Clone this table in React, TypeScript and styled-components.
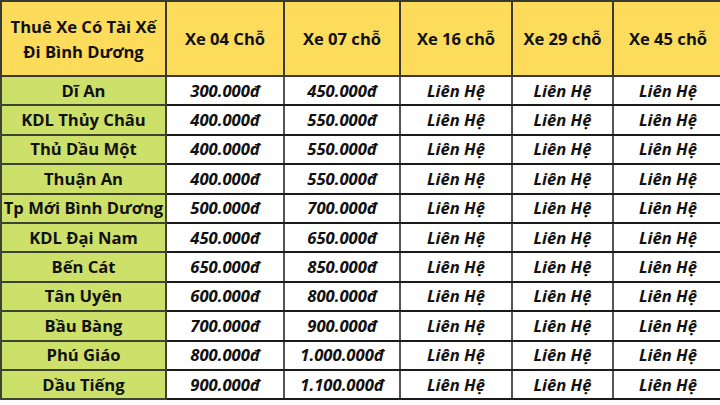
import React from 'react';
import styled, { createGlobalStyle } from 'styled-components';

const GlobalStyle = createGlobalStyle`
  html, body {
    margin: 0;
    padding: 0;
    background: #ffffff;
  }
  body {
    font-family: 'Open Sans', 'Noto Sans', sans-serif;
    width: 720px;
    height: 405px;
    overflow: hidden;
  }
`;

const rows = [
  { place: 'Dĩ An', p4: '300.000đ', p7: '450.000đ' },
  { place: 'KDL Thủy Châu', p4: '400.000đ', p7: '550.000đ' },
  { place: 'Thủ Dầu Một', p4: '400.000đ', p7: '550.000đ' },
  { place: 'Thuận An', p4: '400.000đ', p7: '550.000đ' },
  { place: 'Tp Mới Bình Dương', p4: '500.000đ', p7: '700.000đ' },
  { place: 'KDL Đại Nam', p4: '450.000đ', p7: '650.000đ' },
  { place: 'Bến Cát', p4: '650.000đ', p7: '850.000đ' },
  { place: 'Tân Uyên', p4: '600.000đ', p7: '800.000đ' },
  { place: 'Bầu Bàng', p4: '700.000đ', p7: '900.000đ' },
  { place: 'Phú Giáo', p4: '800.000đ', p7: '1.000.000đ' },
  { place: 'Dầu Tiếng', p4: '900.000đ', p7: '1.100.000đ' },
];

const columns = [
  { title: 'Xe 04 Chỗ', width: 118 },
  { title: 'Xe 07 chỗ', width: 116 },
  { title: 'Xe 16 chỗ', width: 112 },
  { title: 'Xe 29 chỗ', width: 101 },
  { title: 'Xe 45 chỗ', width: 110 },
];

const App: React.FC = () => {
  return (
    <>
      <GlobalStyle />
      <Table>
        <colgroup>
          <col style={{ width: 165 }} />
          {columns.map((c) => (
            <col key={c.title} style={{ width: c.width }} />
          ))}
        </colgroup>
        <thead>
          <tr>
            <HeadCell>
              Thuê Xe Có Tài Xế
              <br />
              Đi Bình Dương
            </HeadCell>
            {columns.map((c) => (
              <HeadCell key={c.title}>{c.title}</HeadCell>
            ))}
          </tr>
        </thead>
        <tbody>
          {rows.map((r) => (
            <Row key={r.place}>
              <PlaceCell>{r.place}</PlaceCell>
              <PriceCell>{r.p4}</PriceCell>
              <PriceCell>{r.p7}</PriceCell>
              <PriceCell>Liên Hệ</PriceCell>
              <PriceCell>Liên Hệ</PriceCell>
              <PriceCell>Liên Hệ</PriceCell>
            </Row>
          ))}
        </tbody>
      </Table>
    </>
  );
};

export default App;

const Table = styled.table`
  border-collapse: collapse;
  table-layout: fixed;
  width: 722px;
  color: #111111;
  font-size: 16.6px;
  font-weight: 700;
`;

const HeadCell = styled.th`
  height: 73px;
  padding: 0;
  background: #fddc5c;
  border: 2px solid #3a3a32;
  text-align: center;
  vertical-align: middle;
  line-height: 25px;
  font-weight: 700;
`;

const Row = styled.tr`
  height: 29.4px;
`;

const PlaceCell = styled.td`
  padding: 0;
  background: #cde06a;
  border: 2px solid #3c4330;
  text-align: center;
  vertical-align: middle;
  line-height: 20px;
  white-space: nowrap;
`;

const PriceCell = styled.td`
  padding: 0;
  background: #ffffff;
  border: 2px solid #555555;
  border-top-color: #1a1a1a;
  border-bottom-color: #1a1a1a;
  text-align: center;
  vertical-align: middle;
  font-style: italic;
  line-height: 20px;
  white-space: nowrap;
`;
